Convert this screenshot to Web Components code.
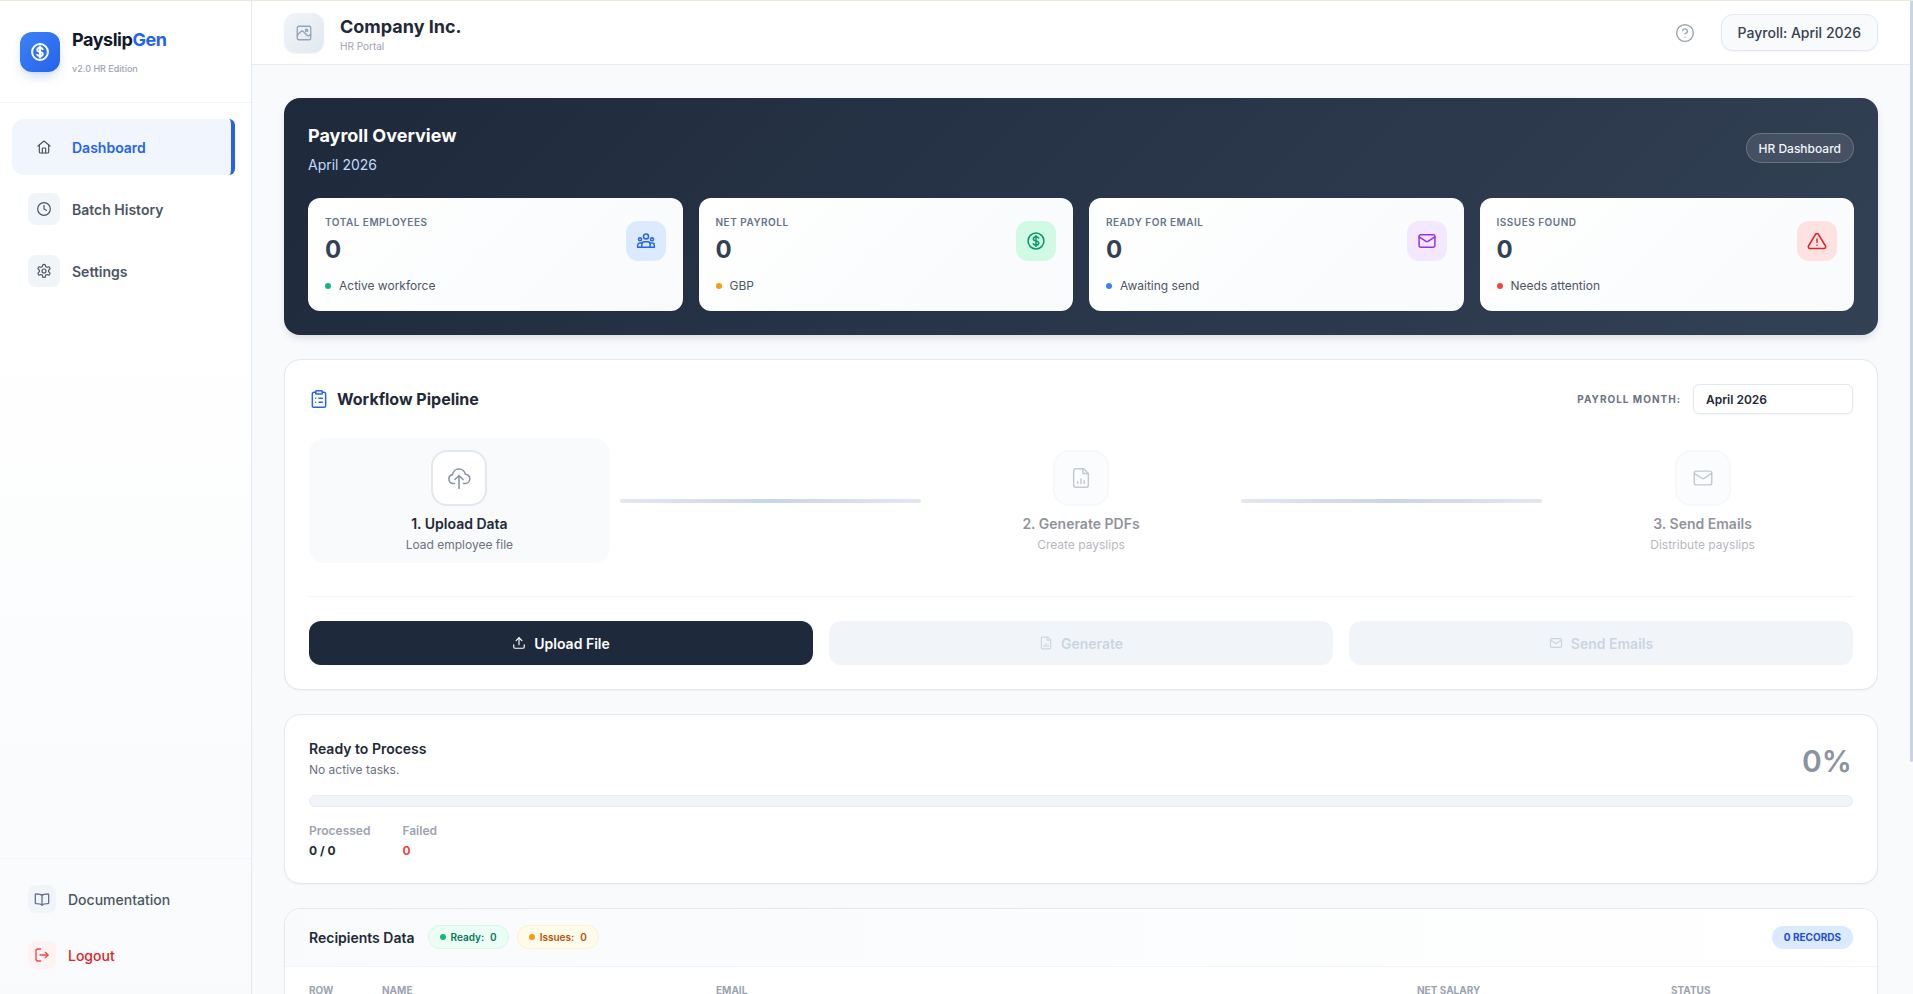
<!DOCTYPE html>
<html lang="en"><head><meta charset="utf-8"><title>PayslipGen</title>
<style>
html,body{margin:0;padding:0;height:100%;overflow:hidden;background:#f8fafc;font-family:Inter,"Liberation Sans",sans-serif;color:#1f2937}
</style></head><body>
<app-shell>
  <app-sidebar slot="side"></app-sidebar>
  <top-header slot="main"></top-header>
  <main-body slot="main">
    <hero-panel></hero-panel>
    <workflow-card></workflow-card>
    <progress-card></progress-card>
    <recipients-card></recipients-card>
  </main-body>
</app-shell>
<script>
const svg=(s,p,sw=2,extra='')=>`<svg xmlns="http://www.w3.org/2000/svg" width="${s}" height="${s}" viewBox="0 0 24 24" fill="none" stroke="currentColor" stroke-width="${sw}" stroke-linecap="round" stroke-linejoin="round" ${extra}>${p}</svg>`;
const I={
 dollar:'<circle cx="12" cy="12" r="9.5"/><path d="M15.2 8.600c-.5-1-1.700-1.600-3.200-1.600-1.900 0-3.200 1-3.200 2.500 0 3.400 6.500 1.600 6.500 5 0 1.500-1.400 2.500-3.300 2.500-1.600 0-2.800-.7-3.300-1.800M12 5.500v13"/>',
 home:'<path d="M3 10.500 12 3l9 7.500"/><path d="M5 9v10.500a1.500 1.500 0 0 0 1.500 1.500h11a1.500 1.500 0 0 0 1.500-1.500V9"/><path d="M9.500 21v-6.500a1 1 0 0 1 1-1h3a1 1 0 0 1 1 1V21"/>',
 clock:'<circle cx="12" cy="12" r="9.500"/><path d="M12 6.500V12l3.500 2"/>',
 gear:'<path d="M12.200 2h-.4a2 2 0 0 0-2 2v.2a2 2 0 0 1-1 1.700l-.4.2a2 2 0 0 1-2 0l-.2-.1a2 2 0 0 0-2.700.7l-.2.400a2 2 0 0 0 .7 2.700l.2.100a2 2 0 0 1 1 1.700v.5a2 2 0 0 1-1 1.700l-.2.100a2 2 0 0 0-.7 2.700l.2.400a2 2 0 0 0 2.700.7l.2-.1a2 2 0 0 1 2 0l.4.2a2 2 0 0 1 1 1.700v.2a2 2 0 0 0 2 2h.4a2 2 0 0 0 2-2v-.2a2 2 0 0 1 1-1.700l.4-.2a2 2 0 0 1 2 0l.2.100a2 2 0 0 0 2.700-.7l.2-.4a2 2 0 0 0-.7-2.700l-.2-.1a2 2 0 0 1-1-1.700v-.5a2 2 0 0 1 1-1.700l.2-.1a2 2 0 0 0 .7-2.700l-.2-.4a2 2 0 0 0-2.700-.7l-.2.100a2 2 0 0 1-2 0l-.4-.2a2 2 0 0 1-1-1.700V4a2 2 0 0 0-2-2z"/><circle cx="12" cy="12" r="3"/>',
 book:'<path d="M12 6.500C10.500 5 8.500 4.500 3 4.500a1 1 0 0 0-1 1v12.500a1 1 0 0 0 1 1c5 0 7.500.5 9 2 1.500-1.500 4-2 9-2a1 1 0 0 0 1-1V5.500a1 1 0 0 0-1-1c-5.500 0-7.500.5-9 2z"/><path d="M12 6.500V21"/>',
 logout:'<path d="M10 3H6a3 3 0 0 0-3 3v12a3 3 0 0 0 3 3h4"/><path d="M9 12h12"/><path d="m17 8 4 4-4 4"/>',
 image:'<rect x="3" y="3" width="18" height="18" rx="2"/><circle cx="15.500" cy="8.500" r="1.500"/><path d="m3 15 5-5c1-1 2-1 3 0l5 5c1 1 1.500 1 2.500.5L21 14"/>',
 help:'<circle cx="12" cy="12" r="10"/><path d="M9.100 9a3 3 0 0 1 5.800 1c0 2-3 3-3 3"/><path d="M12 17h.01"/>',
 users:'<circle cx="12" cy="6.500" r="3"/><circle cx="4.800" cy="10" r="1.800"/><circle cx="19.200" cy="10" r="1.800"/><path d="M7 19.500v-3.500a3 3 0 0 1 3-3h4a3 3 0 0 1 3 3v3.500"/><path d="M2 19.500v-2.500a2.500 2.500 0 0 1 2.500-2.500H7M22 19.500v-2.500a2.500 2.500 0 0 0-2.500-2.500H17M2 19.500h20"/>',
 mail:'<rect x="2.500" y="4.500" width="19" height="15" rx="2"/><path d="m2.500 7 8.400 5.500a2 2 0 0 0 2.200 0L21.500 7"/>',
 alert:'<path d="M10.300 3.900 1.800 18a2 2 0 0 0 1.700 3h17a2 2 0 0 0 1.700-3L13.700 3.900a2 2 0 0 0-3.400 0z"/><path d="M12 9.500v4"/><path d="M12 17h.01"/>',
 clip:'<rect x="8" y="2" width="8" height="4" rx="1"/><path d="M16 4h2a2 2 0 0 1 2 2v14a2 2 0 0 1-2 2H6a2 2 0 0 1-2-2V6a2 2 0 0 1 2-2h2"/><path d="M12 11h4M12 16h4M8 11h.01M8 16h.01"/>',
 cloud:'<path d="M7.500 17.500H6.500a4.500 4.500 0 0 1-1-8.900 6.500 6.500 0 0 1 12.800-.4 4.600 4.600 0 0 1-.3 9.300H16.500"/><path d="M12 22.500V9.500M8 13.500l4-4 4 4"/>',
 file:'<path d="M15 2H6a2 2 0 0 0-2 2v16a2 2 0 0 0 2 2h12a2 2 0 0 0 2-2V7z"/><path d="M14 2v5h6"/><path d="M8.500 18v-2M12 18v-5M15.500 18v-3"/>',
 upload:'<path d="M21 15v4a2 2 0 0 1-2 2H5a2 2 0 0 1-2-2v-4"/><path d="m17 8-5-5-5 5"/><path d="M12 3v12"/>'
};
class Base extends HTMLElement{
  constructor(){super();this.attachShadow({mode:'open'});this.shadowRoot.innerHTML=this.render();}
  attr(n,d=''){return this.getAttribute(n)??d;}
}
customElements.define('app-shell',class extends Base{render(){return `<style>
:host{display:flex;height:100vh;width:100%}
.side{flex:0 0 252px;display:flex;min-height:0}
.main{flex:1;min-width:0;overflow:hidden;height:100vh;border-top:1px solid #e9e9dc;box-sizing:border-box}
.rail{flex:0 0 3px;background:#f8fafc;border-top:1px solid #e9e9dc;box-sizing:border-box}
.thumb{height:761px;background:#cbd5e1;border-radius:0 0 2px 2px}
</style><div class="side"><slot name="side"></slot></div><div class="main"><slot name="main"></slot></div><div class="rail"><div class="thumb"></div></div>`}});

customElements.define('nav-item',class extends Base{render(){
 const a=this.hasAttribute('active');
 return `<style>
:host{display:block}
.it{display:flex;align-items:center;gap:12px;height:56px;padding:0 16px;box-sizing:border-box;border-radius:12px;font-size:14px;font-weight:600;color:#4b5563;position:relative}
.ic{width:32px;height:32px;border-radius:8px;background:#f1f5f9;display:flex;align-items:center;justify-content:center;color:#4b5563}
.active{background:#f0f5fe;color:#2563eb}
.active .ic{background:transparent;color:#4b5563}
.active::after{content:"";position:absolute;right:0;top:0;bottom:0;width:6px;border-right:4px solid #2563eb;border-radius:0 10px 10px 0;box-sizing:border-box}
</style><div class="it ${a?'active':''}"><span class="ic">${svg(16,I[this.attr('icon')],1.8)}</span><span><slot></slot></span></div>`}});

customElements.define('foot-link',class extends Base{render(){
 const d=this.hasAttribute('danger');
 return `<style>
:host{display:block}
.it{display:flex;align-items:center;gap:12px;height:52px;padding:0 28px;font-size:14px;font-weight:500;color:${d?'#dc2626':'#4b5563'}}
.ic{width:28px;height:28px;border-radius:8px;background:${d?'#fef2f2':'#f1f5f9'};display:flex;align-items:center;justify-content:center;color:${d?'#ef4444':'#64748b'}}
</style><div class="it"><span class="ic">${svg(16,I[this.attr('icon')],2)}</span><span><slot></slot></span></div>`}});

customElements.define('app-sidebar',class extends Base{render(){return `<style>
:host{display:flex;flex-direction:column;width:252px;height:100vh;box-sizing:border-box;background:linear-gradient(180deg,#fff 0%,#fff 30%,#f8fafc 100%);border-right:1px solid #e2e8f0;border-top:1px solid #e9e9dc}
.brand{display:flex;gap:12px;height:102px;box-sizing:border-box;padding:31px 20px 0;border-bottom:1px solid #f1f5f9;flex:none}
.logo{width:40px;height:40px;border-radius:12px;background:linear-gradient(135deg,#3b82f6,#2563eb);color:#fff;display:flex;align-items:center;justify-content:center;box-shadow:0 6px 12px -3px rgba(37,99,235,.3)}
.name{font-size:18px;font-weight:700;letter-spacing:-.45px;color:#111827;line-height:24px;margin-top:-4px}
.name b{color:#2563eb;font-weight:700}
.ver{font-size:9px;color:#9ca3af;line-height:14px;margin-top:10px;font-weight:500}
nav{flex:1;padding:16px 16px 0 12px;display:flex;flex-direction:column;gap:6px}
.foot{flex:none;border-top:1px solid #f1f5f9;padding:14px 0 13px;display:flex;flex-direction:column;gap:4px}
</style>
<div class="brand"><div class="logo">${svg(20,I.dollar,2.4)}</div><div><div class="name">Payslip<b>Gen</b></div><div class="ver">v2.0 HR Edition</div></div></div>
<nav><nav-item active icon="home">Dashboard</nav-item><nav-item icon="clock">Batch History</nav-item><nav-item icon="gear">Settings</nav-item></nav>
<div class="foot"><foot-link icon="book">Documentation</foot-link><foot-link danger icon="logout">Logout</foot-link></div>`}});

customElements.define('top-header',class extends Base{render(){return `<style>
:host{display:flex;align-items:center;justify-content:space-between;height:64px;box-sizing:border-box;padding:0 32px;background:#fff;border-bottom:1px solid #e9edf2;position:sticky;top:0;z-index:5}
.l{display:flex;align-items:center;gap:16px}
.box{width:40px;height:40px;border-radius:12px;background:linear-gradient(135deg,#f1f5f9,#e2e8f0);display:flex;align-items:center;justify-content:center;color:#94a3b8;box-shadow:0 1px 2px rgba(0,0,0,.06)}
.tx{margin-top:2px}
.t{font-size:18px;font-weight:700;color:#1f2937;line-height:24px}
.s{font-size:10px;color:#9ca3af;line-height:14px}
.r{display:flex;align-items:center;gap:26px}
.h{color:#9ca3af;display:flex}
.pill{height:37px;box-sizing:border-box;padding:0 16px;display:flex;align-items:center;border:1px solid #e2e8f0;border-radius:12px;background:#f8fafc;font-size:14px;font-weight:500;color:#374151;box-shadow:0 1px 2px rgba(0,0,0,.05)}
</style><div class="l"><div class="box">${svg(18,I.image,1.8)}</div><div class="tx"><div class="t">Company Inc.</div><div class="s">HR Portal</div></div></div>
<div class="r"><span class="h">${svg(20,I.help,1.7)}</span><div class="pill">Payroll: April 2026</div></div>`}});

customElements.define('main-body',class extends Base{render(){return `<style>
:host{display:flex;flex-direction:column;gap:24px;padding:33px 32px 32px;box-sizing:border-box}
</style><slot></slot>`}});

customElements.define('stat-card',class extends Base{render(){return `<style>
:host{display:flex;flex:1;min-width:0;justify-content:space-between;box-sizing:border-box;height:113px;padding:17px;border-radius:12px;background:linear-gradient(135deg,#fff,#f8fafc);box-shadow:0 1px 2px rgba(0,0,0,.05)}
.lb{font-size:10px;font-weight:600;letter-spacing:.5px;text-transform:uppercase;color:#64748b;line-height:14px}
.v{font-size:24px;font-weight:700;color:#334155;line-height:32px;margin-top:5px}
.f{display:flex;align-items:center;gap:8px;font-size:12px;color:#4b5563;line-height:16px;margin-top:12px}
.d{width:6px;height:6px;border-radius:50%;background:var(--dot)}
.ic{width:40px;height:40px;border-radius:12px;display:flex;align-items:center;justify-content:center;background:var(--bg);color:var(--fg);margin-top:6px;flex:none}
</style><div><div class="lb">${this.attr('label')}</div><div class="v">${this.attr('value')}</div><div class="f"><span class="d"></span><span><slot></slot></span></div></div>
<div class="ic">${svg(20,I[this.attr('icon')],1.8)}</div>`}});

customElements.define('hero-panel',class extends Base{render(){return `<style>
:host{display:block;box-sizing:border-box;height:237px;padding:24px;border-radius:16px;background:linear-gradient(135deg,#1e293b,#334155);box-shadow:0 4px 10px -2px rgba(15,23,42,.15)}
.top{display:flex;justify-content:space-between;height:76px}
h2{margin:1px 0 0;font-size:18px;font-weight:700;color:#fff;line-height:26px}
p{margin:6px 0 0;font-size:14px;color:#bfdbfe;line-height:20px}
.tag{align-self:flex-start;margin-top:11px;height:30px;box-sizing:border-box;padding:0 12px;display:flex;align-items:center;border:1px solid rgba(255,255,255,.2);border-radius:15px;background:rgba(255,255,255,.1);font-size:12px;font-weight:500;color:#f1f5f9}
.g{display:flex;gap:16px}
</style><div class="top"><div><h2>Payroll Overview</h2><p>April 2026</p></div><div class="tag">HR Dashboard</div></div>
<div class="g">
<stat-card label="Total Employees" value="0" icon="users" style="--bg:#dbeafe;--fg:#2563eb;--dot:#10b981">Active workforce</stat-card>
<stat-card label="Net Payroll" value="0" icon="dollar" style="--bg:#d1fae5;--fg:#059669;--dot:#f59e0b">GBP</stat-card>
<stat-card label="Ready for Email" value="0" icon="mail" style="--bg:#f3e8ff;--fg:#9333ea;--dot:#3b82f6">Awaiting send</stat-card>
<stat-card label="Issues Found" value="0" icon="alert" style="--bg:#fee2e2;--fg:#dc2626;--dot:#ef4444">Needs attention</stat-card>
</div>`}});

customElements.define('pipe-step',class extends Base{render(){
 const on=this.hasAttribute('current');
 return `<style>
:host{flex:1;min-width:0;display:block}
.s{height:125px;box-sizing:border-box;padding-top:12px;border-radius:16px;display:flex;flex-direction:column;align-items:center;background:${on?'#f8fafc':'transparent'};${on?'':'opacity:.5'}}
.ic{width:56px;height:56px;box-sizing:border-box;border:2px solid #e2e8f0;border-radius:16px;background:${on?'#fff':'#f8fafc'};display:flex;align-items:center;justify-content:center;color:#8b95a3;${on?'':'border-color:#eef2f6'}}
.t{font-size:14px;font-weight:600;color:#1f2937;line-height:20px;margin-top:8px}
.d{font-size:12px;color:#6b7280;line-height:16px;margin-top:3px}
</style><div class="s"><div class="ic">${svg(on?24:22,I[this.attr('icon')],1.6)}</div><div class="t">${this.attr('title')}</div><div class="d">${this.attr('desc')}</div></div>`}});

customElements.define('pipe-line',class extends Base{render(){return `<style>
:host{flex:1;min-width:0;display:block;height:4px;margin-top:61px;border-radius:2px;background:linear-gradient(90deg,#e2e8f0,#cbd5e1,#e2e8f0)}
</style>`}});

customElements.define('action-btn',class extends Base{render(){
 const off=this.hasAttribute('disabled');
 return `<style>
:host{flex:1;min-width:0;height:44px;box-sizing:border-box;display:flex;align-items:center;justify-content:center;gap:8px;border-radius:12px;font-size:14px;font-weight:600;background:${off?'#f1f5f9':'#1e293b'};color:${off?'#cbd5e1':'#fff'}}
svg{display:block}
</style>${svg(14,I[this.attr('icon')],2)}<span><slot></slot></span>`}});

const cardCss=`:host{display:block;box-sizing:border-box;background:#fff;border:1px solid #e2e8f0;border-radius:16px;box-shadow:0 1px 2px rgba(0,0,0,.04)}`;
customElements.define('workflow-card',class extends Base{render(){return `<style>${cardCss}
:host{height:331.400px;padding:24px 24px 0}
.hd{display:flex;justify-content:space-between;align-items:center;height:30px}
.ti{display:flex;align-items:center;gap:8px;font-size:16px;font-weight:700;color:#1f2937}
.ti span{color:#2563eb;display:flex}
.mo{display:flex;align-items:center;gap:12px}
.ml{font-size:10px;font-weight:700;letter-spacing:1px;text-transform:uppercase;color:#6b7280}
.in{width:160px;height:30px;box-sizing:border-box;border:1px solid #e2e8f0;border-radius:6px;display:flex;align-items:center;padding:0 12px;font-size:12px;font-weight:600;color:#1f2937;box-shadow:0 1px 2px rgba(0,0,0,.04)}
.st{display:flex;gap:10px;margin-top:24px;height:125px}
.dv{height:1px;background:#f1f5f9;margin-top:33px}
.ac{display:flex;gap:16px;margin-top:24px}
</style><div class="hd"><div class="ti"><span>${svg(20,I.clip,1.8)}</span>Workflow Pipeline</div><div class="mo"><span class="ml">Payroll Month:</span><div class="in">April 2026</div></div></div>
<div class="st"><pipe-step current icon="cloud" title="1. Upload Data" desc="Load employee file"></pipe-step><pipe-line></pipe-line><pipe-step icon="file" title="2. Generate PDFs" desc="Create payslips"></pipe-step><pipe-line></pipe-line><pipe-step icon="mail" title="3. Send Emails" desc="Distribute payslips"></pipe-step></div>
<div class="dv"></div>
<div class="ac"><action-btn icon="upload">Upload File</action-btn><action-btn disabled icon="file">Generate</action-btn><action-btn disabled icon="mail">Send Emails</action-btn></div>`}});

customElements.define('progress-card',class extends Base{render(){return `<style>${cardCss}
:host{height:169.600px;padding:24px 24px 0}
.h{display:flex;justify-content:space-between}
.t{font-size:14px;font-weight:600;color:#1f2937;line-height:20px}
.s{font-size:12px;color:#6b7280;line-height:16px;margin-top:3px}
.p{font-size:30px;font-weight:600;color:#8a939e;line-height:36px;margin-top:4px;margin-right:1px}
.b{height:12px;margin-top:16px;box-sizing:border-box;border:1px solid #e8edf3;border-radius:6px;background:#f1f5f9}
.k{display:flex;gap:32px;margin-top:15px}
.l{font-size:12px;font-weight:600;color:#9ca3af;line-height:18px}
.v{font-size:12px;font-weight:700;color:#1f2937;line-height:18px;margin-top:2px}
.r{color:#ef4444}
</style><div class="h"><div><div class="t">Ready to Process</div><div class="s">No active tasks.</div></div><div class="p">0%</div></div>
<div class="b"></div><div class="k"><div><div class="l">Processed</div><div class="v">0 / 0</div></div><div><div class="l">Failed</div><div class="v r">0</div></div></div>`}});

customElements.define('count-chip',class extends Base{render(){return `<style>
:host{display:inline-flex;align-items:center;gap:5px;height:24px;box-sizing:border-box;padding:0 11px;border-radius:12px;font-size:10px;font-weight:600;background:var(--bg);border:1px solid var(--bd);color:var(--fg)}
.d{width:6px;height:6px;border-radius:50%;background:var(--dot)}
.n{margin-left:1px}
</style><span class="d"></span><span><slot></slot></span><span class="n">0</span>`}});

customElements.define('recipients-card',class extends Base{render(){return `<style>${cardCss}
:host{overflow:hidden;min-height:356px}
.h{height:58px;box-sizing:border-box;display:flex;align-items:center;padding:0 24px;gap:12px;background:linear-gradient(90deg,#f8fafc,#fff);border-bottom:1px solid #f1f5f9}
.t{font-size:14px;font-weight:600;color:#1f2937;margin-right:1px}
.g{flex:1}
.rec{height:23px;display:flex;align-items:center;padding:0 12px;border-radius:12px;background:#dbeafe;color:#1d4ed8;font-size:10px;font-weight:700}
.tb{display:grid;grid-template-columns:73px 334px 701px 254px 1fr;padding:0 24px}
.th{font-size:10px;font-weight:700;color:#9ca3af;text-transform:uppercase;line-height:14px;padding:16px 0}
</style><div class="h"><span class="t">Recipients Data</span><count-chip style="--bg:#ecfdf5;--bd:#d1fae5;--fg:#047857;--dot:#10b981">Ready:</count-chip><count-chip style="--bg:#fffbeb;--bd:#fef3c7;--fg:#b45309;--dot:#f59e0b;margin-left:-4px">Issues:</count-chip><span class="g"></span><span class="rec">0 RECORDS</span></div>
<div class="tb"><div class="th">Row</div><div class="th">Name</div><div class="th">Email</div><div class="th">Net Salary</div><div class="th">Status</div></div>`}});
</script></body></html>
